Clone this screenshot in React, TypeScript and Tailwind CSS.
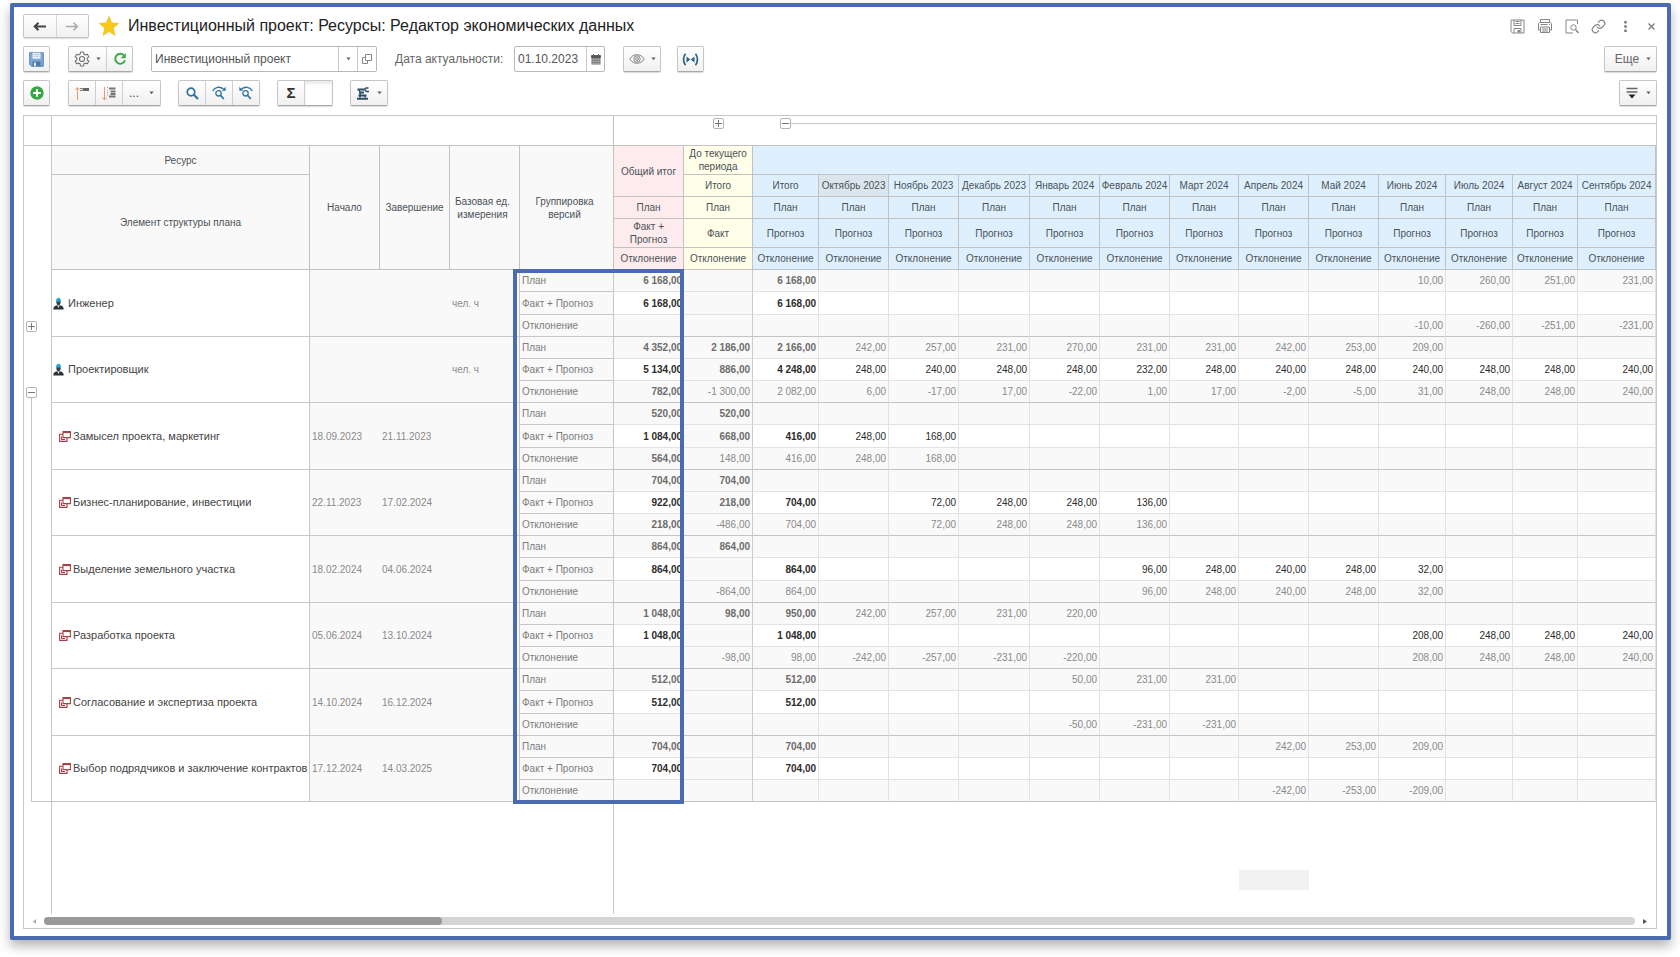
import React from 'react';
import clsx from 'clsx';

type Triple = [string[], string[], string[]];

interface ResourceRow {
  id: string;
  name: string;
  kind: 'person' | 'task';
  start?: string;
  end?: string;
  unit?: string;
  tree: 'plus' | 'minus' | 'line' | 'last';
  values: Triple;
}

const MONTHS = [
  'Октябрь 2023', 'Ноябрь 2023', 'Декабрь 2023', 'Январь 2024', 'Февраль 2024', 'Март 2024',
  'Апрель 2024', 'Май 2024', 'Июнь 2024', 'Июль 2024', 'Август 2024', 'Сентябрь 2024',
];

const VERSIONS = ['План', 'Факт + Прогноз', 'Отклонение'];

// Values are stored as: total | before current period | subtotal | 12 months
const line = (s: string) => s.split('|').map((v) => v.trim());

const rows: ResourceRow[] = [
  {
    id: 'engineer', name: 'Инженер', kind: 'person', unit: 'чел. ч', tree: 'plus',
    values: [
      line('6 168,00||6 168,00|||||||||10,00|260,00|251,00|231,00'),
      line('6 168,00||6 168,00||||||||||||'),
      line('|||||||||||-10,00|-260,00|-251,00|-231,00'),
    ],
  },
  {
    id: 'designer', name: 'Проектировщик', kind: 'person', unit: 'чел. ч', tree: 'minus',
    values: [
      line('4 352,00|2 186,00|2 166,00|242,00|257,00|231,00|270,00|231,00|231,00|242,00|253,00|209,00|||'),
      line('5 134,00|886,00|4 248,00|248,00|240,00|248,00|248,00|232,00|248,00|240,00|248,00|240,00|248,00|248,00|240,00'),
      line('782,00|-1 300,00|2 082,00|6,00|-17,00|17,00|-22,00|1,00|17,00|-2,00|-5,00|31,00|248,00|248,00|240,00'),
    ],
  },
  {
    id: 'concept', name: 'Замысел проекта, маркетинг', kind: 'task', start: '18.09.2023', end: '21.11.2023', tree: 'line',
    values: [
      line('520,00|520,00|||||||||||||'),
      line('1 084,00|668,00|416,00|248,00|168,00||||||||||'),
      line('564,00|148,00|416,00|248,00|168,00||||||||||'),
    ],
  },
  {
    id: 'business', name: 'Бизнес-планирование, инвестиции', kind: 'task', start: '22.11.2023', end: '17.02.2024', tree: 'line',
    values: [
      line('704,00|704,00|||||||||||||'),
      line('922,00|218,00|704,00||72,00|248,00|248,00|136,00|||||||'),
      line('218,00|-486,00|704,00||72,00|248,00|248,00|136,00|||||||'),
    ],
  },
  {
    id: 'land', name: 'Выделение земельного участка', kind: 'task', start: '18.02.2024', end: '04.06.2024', tree: 'line',
    values: [
      line('864,00|864,00|||||||||||||'),
      line('864,00||864,00|||||96,00|248,00|240,00|248,00|32,00|||'),
      line('|-864,00|864,00|||||96,00|248,00|240,00|248,00|32,00|||'),
    ],
  },
  {
    id: 'development', name: 'Разработка проекта', kind: 'task', start: '05.06.2024', end: '13.10.2024', tree: 'line',
    values: [
      line('1 048,00|98,00|950,00|242,00|257,00|231,00|220,00||||||||'),
      line('1 048,00||1 048,00|||||||||208,00|248,00|248,00|240,00'),
      line('|-98,00|98,00|-242,00|-257,00|-231,00|-220,00|||||208,00|248,00|248,00|240,00'),
    ],
  },
  {
    id: 'approval', name: 'Согласование и экспертиза проекта', kind: 'task', start: '14.10.2024', end: '16.12.2024', tree: 'line',
    values: [
      line('512,00||512,00||||50,00|231,00|231,00||||||'),
      line('512,00||512,00||||||||||||'),
      line('||||||-50,00|-231,00|-231,00||||||'),
    ],
  },
  {
    id: 'contracts', name: 'Выбор подрядчиков и заключение контрактов', kind: 'task', start: '17.12.2024', end: '14.03.2025', tree: 'last',
    values: [
      line('704,00||704,00|||||||242,00|253,00|209,00|||'),
      line('704,00||704,00||||||||||||'),
      line('|||||||||-242,00|-253,00|-209,00|||'),
    ],
  },
];

const COLUMN_CLASSES = [
  'w-[28px]', 'w-[258px]', 'w-[70px]', 'w-[70px]', 'w-[70px]', 'w-[94px]', 'w-[70px]', 'w-[69px]', 'w-[66px]',
  'w-[70px]', 'w-[70px]', 'w-[71px]', 'w-[70px]', 'w-[70px]', 'w-[69px]', 'w-[70px]', 'w-[70px]', 'w-[67px]',
  'w-[67px]', 'w-[65px]', 'w-[78px]',
];

const BUTTON = 'flex items-center justify-center bg-linear-to-b from-white to-[#f0f0f0]';
const GROUP = 'flex h-[26px] shrink-0 overflow-hidden rounded-xs border border-[#c6c6c6] border-b-[#a8a8a8] divide-x divide-[#cfcfcf] shadow-[0_1px_1px_rgba(0,0,0,0.15)]';

const Caret = () => (
  <svg width="5" height="4" viewBox="0 0 5 4" fill="#666"><path d="M.3.500h4.400L2.500 3.300z" /></svg>
);

const Toggle: React.FC<{ open?: boolean; label: string }> = ({ open, label }) => (
  <button aria-label={label} className="block h-[11px] w-[11px] shrink-0 rounded-xs border border-[#b4b4b4] bg-white">
    <svg width="9" height="9" viewBox="0 0 9 9" stroke="#777" strokeWidth="1" fill="none">
      <path d={open ? 'M1 4.500h7' : 'M1 4.500h7M4.500 1v7'} />
    </svg>
  </button>
);

const SaveIcon = () => (
  <svg width="15" height="15" viewBox="0 0 15 15">
    <path d="M.7.7h13.600v13.600H2.500L.7 12.500z" fill="#7fa8d6" stroke="#5b87ba" strokeWidth="1" />
    <path d="M3.500.8h8v5.900h-8z" fill="#e8f0f8" />
    <path d="M4.800 2.500h5.400M4.800 4.300h5.400" stroke="#9db9d8" strokeWidth=".7" />
    <path d="M3.500 9.500h8v4.800h-8z" fill="#4a76a8" />
    <path d="M5 10.500h2v3.800H5z" fill="#dfe9f3" />
  </svg>
);

const GearIcon = () => (
  <svg width="16" height="16" viewBox="0 0 24 24" fill="none" stroke="#747474" strokeWidth="1.700" strokeLinejoin="round">
    <path d="M9.800 1.500h4.400l.7 3.200 2 1.100 3.100-1 2.200 3.800-2.400 2.200v2.400l2.400 2.200-2.200 3.800-3.100-1-2 1.100-.7 3.200H9.800l-.7-3.200-2-1.100-3.100 1-2.200-3.800 2.400-2.200v-2.400L1.800 8.600 4 4.800l3.100 1 2-1.100z" />
    <circle cx="12" cy="12" r="3.800" />
  </svg>
);

const RefreshIcon = () => (
  <svg width="14" height="14" viewBox="0 0 14 14" fill="none" stroke="#3cab4a" strokeWidth="2">
    <path d="M11 3.400A5 5 0 1 0 12 8.300" />
    <path d="M12.800 1v5.200H7.600z" fill="#3cab4a" stroke="none" />
  </svg>
);

const OpenIcon = () => (
  <svg width="10" height="10" viewBox="0 0 10 10" fill="#fff" stroke="#888" strokeWidth="1">
    <path d="M.5 3.500h5v6h-5z" />
    <path d="M3.500.5h6v6h-6z" />
  </svg>
);

const CalendarIcon = () => (
  <svg width="10" height="11" viewBox="0 0 10 11">
    <path d="M.5 1.500h9v9h-9z" fill="#777" />
    <path d="M.5 1.500h9v2h-9zM2.500 0v2M7.500 0v2" fill="#555" stroke="#555" strokeWidth=".8" />
    <path d="M1.500 5.200h7M1.500 7.200h7M1.500 9.200h7" stroke="#e4e4e4" strokeWidth=".8" strokeDasharray="1.200 .7" />
  </svg>
);

const EyeIcon = () => (
  <svg width="16" height="12" viewBox="0 0 16 12" fill="none" stroke="#888" strokeWidth="1">
    <path d="M.8 6C4 .3 12 .3 15.200 6 12 11.700 4 11.700.8 6z" />
    <circle cx="8" cy="6" r="3.200" />
    <circle cx="8" cy="6" r="1.400" />
  </svg>
);

const SyncIcon = () => (
  <svg width="17" height="13" viewBox="0 0 17 13" fill="none" stroke="#2c6184" strokeWidth="1.700">
    <path d="M3.500.8c-2.600 3.300-2.600 8.100 0 11.400M13.500.8c2.600 3.300 2.600 8.100 0 11.400" />
    <path d="M4.500 3.500L8.300 6.500 4.500 9.500zM12.500 3.500L8.700 6.500l3.800 3z" fill="#2c6184" stroke="none" />
  </svg>
);

const AddIcon = () => (
  <svg width="14" height="14" viewBox="0 0 14 14">
    <circle cx="7" cy="7" r="6.700" fill="#35a745" />
    <path d="M7 3.200v7.600M3.200 7h7.600" stroke="#fff" strokeWidth="2" />
  </svg>
);

const CollapseIcon = () => (
  <svg width="14" height="15" viewBox="0 0 14 15" fill="none">
    <path d="M2.500 14V2M.5 4l2-2.500 2 2.500" stroke="#eb9a6c" strokeWidth="1" />
    <path d="M5 2.500h2M5 4.500h2" stroke="#777" />
    <path d="M7.500 3.500H14" stroke="#666" strokeWidth="3" />
  </svg>
);

const ExpandIcon = () => (
  <svg width="14" height="15" viewBox="0 0 14 15" fill="none">
    <path d="M2.500 1v12.500M.5 11.500l2 2.500 2-2.500" stroke="#eb9a6c" strokeWidth="1" />
    <path d="M7 2.500h6.500M8.500 5.500h5M8.500 8h5M7 10.500h6.500" stroke="#777" strokeWidth="1.800" />
    <path d="M5.500 1v10" stroke="#999" strokeDasharray="1 1.500" />
  </svg>
);

const SearchIcon = () => (
  <svg width="13" height="13" viewBox="0 0 13 13" fill="none" stroke="#2f74a5">
    <circle cx="5" cy="5" r="3.800" strokeWidth="1.700" />
    <path d="M7.800 7.800l4.200 4.200" strokeWidth="2.200" />
  </svg>
);

const SearchTurnIcon: React.FC<{ back?: boolean }> = ({ back }) => (
  <svg width="14" height="14" viewBox="0 0 14 14" fill="none" stroke="#2f74a5">
    <path d={back ? 'M2.500 3C6 .2 11 .8 13.300 5' : 'M11.500 3C8 .2 3 .8.7 5'} strokeWidth="1.300" />
    <path d={back ? 'M.3.800v4h4z' : 'M13.700.800v4h-4z'} fill="#2f74a5" stroke="none" />
    <circle cx="6.500" cy="7.300" r="2.700" strokeWidth="1.300" />
    <path d="M8.500 9.300l3.300 3.700" strokeWidth="1.700" />
  </svg>
);

const RobotIcon = () => (
  <svg width="14" height="13" viewBox="0 0 14 13" fill="none" stroke="#2b4d66">
    <path d="M1 11.800h11" strokeWidth="2" />
    <path d="M1.500 2.500h7M3 5.500h5" strokeWidth="2" />
    <path d="M2.500 2.500l2.500 4M8.500 2.500l1.500-1.500h2.500M8.500 2.500l2 2h2.500" strokeWidth="1.400" />
    <path d="M2.500 8.500h8" strokeWidth="2" />
    <path d="M4 6.500v4M9 8.500v2" strokeWidth="1.600" />
  </svg>
);

const FilterIcon = () => (
  <svg width="12" height="12" viewBox="0 0 12 12">
    <path d="M.5 1.500h11M.5 5h11" stroke="#666" strokeWidth="1.300" />
    <path d="M2.500 7.500h7L6 11.500z" fill="#222" />
  </svg>
);

const DisketteIcon = () => (
  <svg width="15" height="15" viewBox="0 0 15 15" fill="none" stroke="#858585">
    <path d="M1 1h13v13H2.500L1 12.500z" />
    <path d="M4 1v5.500h7V1M5.500 2.500h4M5.500 4.500h4M4 14v-4.500h7V14" />
    <path d="M7.500 11h2.500v2.500H7.500z" fill="#858585" stroke="none" />
  </svg>
);

const PrinterIcon = () => (
  <svg width="16" height="16" viewBox="0 0 16 16" fill="none" stroke="#858585">
    <path d="M3.500 4.500v-3h9v3M3.500 12h-2V5.500l1-1h11l1 1V12h-2" />
    <path d="M3.500 9h9v5.500h-9zM3.500 6.500h7M5 11h6M5 13h6" />
    <path d="M12 6.500h1" />
  </svg>
);

const PreviewIcon = () => (
  <svg width="14" height="15" viewBox="0 0 14 15" fill="none" stroke="#858585">
    <path d="M12.500 5V1H1v13h7" />
    <circle cx="8.500" cy="8.500" r="2.700" />
    <path d="M10.500 10.500l3 3.500" strokeWidth="1.500" />
  </svg>
);

const LinkIcon = () => (
  <svg width="15" height="15" viewBox="0 0 24 24" fill="none" stroke="#858585" strokeWidth="1.900" strokeLinecap="round">
    <path d="M10 13a5 5 0 0 0 7.540.54l3-3a5 5 0 0 0-7.070-7.070l-1.720 1.710" />
    <path d="M14 11a5 5 0 0 0-7.540-.54l-3 3a5 5 0 0 0 7.070 7.070l1.710-1.710" />
  </svg>
);

const PersonIcon = () => (
  <svg width="11" height="13" viewBox="0 0 11 13" className="shrink-0">
    <path d="M.3 12.500c0-3 1.500-4 3.500-4.300h3.400c2 .3 3.500 1.300 3.500 4.300z" fill="#2c3338" />
    <path d="M4.200 8.200h2.600L5.500 11z" fill="#cfe6f2" />
    <ellipse cx="5.500" cy="5.300" rx="2.100" ry="2.900" fill="#3a4248" />
    <path d="M3 4.500C3-.5 8-.5 8 4.500z" fill="#23a3dc" />
  </svg>
);

const TaskIcon = () => (
  <svg width="12" height="11" viewBox="0 0 12 11" fill="#fff" stroke="#a8404a" strokeWidth="1.100" className="shrink-0">
    <path d="M.6 3.200h7.400v7.200H.6z" />
    <path d="M4 .6h7.400v6H4z" />
    <path d="M4 1.300h7.400" strokeWidth="1.600" />
    <path d="M2.300 8.500H6M2.500 8.500V5.500" />
  </svg>
);

const TreeCell: React.FC<{ row: ResourceRow }> = ({ row }) => {
  if (row.tree === 'plus' || row.tree === 'minus') {
    return (
      <td rowSpan={3} className="h-px border-r border-[#c8c8c8] p-0 align-bottom">
        <div className="flex h-full flex-col items-start justify-end pl-[2px]">
          <Toggle open={row.tree === 'minus'} label={row.name} />
          <div className={clsx('ml-[5px] h-[5px]', row.tree === 'minus' && 'border-l border-[#c4c4c4]')} />
        </div>
      </td>
    );
  }
  return (
    <td rowSpan={3} className="h-px border-r border-[#c8c8c8] p-0">
      <div className={clsx('ml-[7px] h-full border-l border-[#c4c4c4]', row.tree === 'last' && 'border-b')} />
    </td>
  );
};

const valueClass = (version: number, col: number) => {
  const bold = col === 0 || (col < 3 && version < 2);
  const white = version === 1 && col !== 1;
  return clsx(
    bold && 'font-bold',
    white ? 'bg-white text-[#2c2c2c]' : 'bg-[#f9f9f9]',
    !white && (bold ? 'text-[#6c6c6c]' : 'text-[#8a8a8a]'),
    version === 2 ? 'border-b-[#c4c4c4]' : 'border-b-[#e2e2e2]',
    col < 2 ? 'border-r-[#cccccc]' : 'border-r-[#e2e2e2]',
    col === 0 ? 'pr-px' : 'pr-[2px]',
  );
};

const HEAD = 'border-r border-b border-[#c2c2c2] p-0 text-center font-normal';

const App: React.FC = () => {
  const headLine = (label: string) => (
    <>
      <th className={clsx(HEAD, 'bg-[#fdebed]')}>{label}</th>
      <th className={clsx(HEAD, 'bg-[#fefee9]')}>{label}</th>
      {['Итого', ...MONTHS].map((m) => (
        <th key={m} className={clsx(HEAD, 'bg-[#def0fe]')}>{label}</th>
      ))}
    </>
  );

  return (
    <div className="min-h-screen overflow-hidden bg-white pt-[3px] pr-[9px] pb-4 pl-[10px] font-['Liberation_Sans',Arial,sans-serif] text-[#444]">
      <main className="rounded-xs border-4 border-[#4a6baf] bg-white py-[7px] pr-[10px] pl-[9px] shadow-[0_6px_12px_rgba(0,0,0,0.3)]">
        {/* Title bar */}
        <header className="flex h-[24px] items-center">
          <div className="flex h-[24px] w-[66px] overflow-hidden rounded-xs border border-[#c6c6c6] divide-x divide-[#d6d6d6] shadow-[0_1px_1px_rgba(0,0,0,0.15)]">
            <button aria-label="Назад" className={clsx(BUTTON, 'flex-1')}>
              <svg width="13" height="9" viewBox="0 0 13 9" fill="none" stroke="#444" strokeWidth="2"><path d="M13 4.500H2M5.500.7L1.700 4.500l3.800 3.800" /></svg>
            </button>
            <button aria-label="Вперед" className={clsx(BUTTON, 'flex-1')}>
              <svg width="13" height="9" viewBox="0 0 13 9" fill="none" stroke="#aaa" strokeWidth="1.600"><path d="M0 4.500h11M7.500.7l3.800 3.800-3.800 3.800" /></svg>
            </button>
          </div>
          <svg width="20" height="20" viewBox="0 0 20 20" className="ml-[10px]">
            <path d="M10 .3l2.700 6.500 7 .6-5.300 4.600 1.600 7.500L10 15.600 4 19.500l1.600-7.500L.3 7.400l7-.6z" fill="#f7ca18" stroke="#e3b21c" strokeWidth=".5" />
          </svg>
          <h1 className="ml-[9px] text-[16px] leading-[24px] text-[#222]">Инвестиционный проект: Ресурсы: Редактор экономических данных</h1>
          <div className="ml-auto flex items-center gap-3">
            <button aria-label="Сохранить"><DisketteIcon /></button>
            <button aria-label="Печать"><PrinterIcon /></button>
            <button aria-label="Просмотр"><PreviewIcon /></button>
            <button aria-label="Ссылка"><LinkIcon /></button>
            <button aria-label="Меню" className="flex w-[15px] justify-center">
              <svg width="3" height="11" viewBox="0 0 3 11" fill="#777"><path d="M.3 0h2.400v2.400H.3zM.3 4.300h2.400v2.400H.3zM.3 8.600h2.400V11H.3z" /></svg>
            </button>
            <button aria-label="Закрыть" className="flex w-[12px] justify-center">
              <svg width="7" height="7" viewBox="0 0 7 7" stroke="#777" strokeWidth="1.200"><path d="M.5.5l6 6M6.500.5l-6 6" /></svg>
            </button>
          </div>
        </header>

        {/* Main toolbar */}
        <div className="mt-2 flex h-[26px] items-center text-[12px]">
          <div className={GROUP}>
            <button aria-label="Записать" className={clsx(BUTTON, 'w-[25px]')}><SaveIcon /></button>
          </div>
          <div className={clsx(GROUP, 'ml-[18px]')}>
            <button aria-label="Настройки" className={clsx(BUTTON, 'w-[38px] gap-[6px]')}><GearIcon /><Caret /></button>
            <button aria-label="Обновить" className={clsx(BUTTON, 'w-[25px]')}><RefreshIcon /></button>
          </div>
          <div className="ml-[18px] flex h-[26px] w-[226px] rounded-xs border border-[#b8b8b8] divide-x divide-[#c8c8c8]">
            <input aria-label="Проект" defaultValue="Инвестиционный проект" className="w-[187px] pl-[3px] text-[#555] outline-none" />
            <button aria-label="Выбрать" className="flex w-[19px] items-center justify-center"><Caret /></button>
            <button aria-label="Открыть" className="flex flex-1 items-center justify-center"><OpenIcon /></button>
          </div>
          <label htmlFor="date" className="ml-[18px] w-[119px] whitespace-nowrap text-[#666]">Дата актуальности:</label>
          <div className="flex h-[26px] w-[91px] rounded-xs border border-[#b8b8b8] divide-x divide-[#c8c8c8]">
            <input id="date" defaultValue="01.10.2023" className="w-[72px] pl-[3px] text-[#555] outline-none" />
            <button aria-label="Календарь" className="flex flex-1 items-center justify-center"><CalendarIcon /></button>
          </div>
          <div className={clsx(GROUP, 'ml-[18px]')}>
            <button aria-label="Видимость" className={clsx(BUTTON, 'w-[36px] gap-[6px]')}><EyeIcon /><Caret /></button>
          </div>
          <div className={clsx(GROUP, 'ml-[16px]')}>
            <button aria-label="Синхронизация" className={clsx(BUTTON, 'w-[25px]')}><SyncIcon /></button>
          </div>
          <div className={clsx(GROUP, 'ml-auto')}>
            <button className={clsx(BUTTON, 'w-[51px] gap-[7px] pl-[5px] text-[#666]')}>Еще<Caret /></button>
          </div>
        </div>

        {/* Table toolbar */}
        <div className="mt-2 flex h-[26px] items-center text-[12px]">
          <div className={GROUP}>
            <button aria-label="Добавить" className={clsx(BUTTON, 'w-[25px]')}><AddIcon /></button>
          </div>
          <div className={clsx(GROUP, 'ml-[18px]')}>
            <button aria-label="Свернуть" className={clsx(BUTTON, 'w-[27px]')}><CollapseIcon /></button>
            <button aria-label="Развернуть" className={clsx(BUTTON, 'w-[27px]')}><ExpandIcon /></button>
            <button aria-label="Уровни" className={clsx(BUTTON, 'w-[37px] gap-[10px]')}>...<Caret /></button>
          </div>
          <div className={clsx(GROUP, 'ml-[17px]')}>
            <button aria-label="Найти" className={clsx(BUTTON, 'w-[27px]')}><SearchIcon /></button>
            <button aria-label="Найти далее" className={clsx(BUTTON, 'w-[27px]')}><SearchTurnIcon /></button>
            <button aria-label="Найти ранее" className={clsx(BUTTON, 'w-[26px]')}><SearchTurnIcon back /></button>
          </div>
          <div className={clsx(GROUP, 'ml-[17px]')}>
            <button aria-label="Сумма" className={clsx(BUTTON, 'w-[27px] text-[15px] font-bold text-[#333]')}>Σ</button>
            <input aria-label="Результат" readOnly className="w-[27px] bg-white shadow-[inset_0_3px_3px_rgba(0,0,0,0.08)] outline-none" />
          </div>
          <div className={clsx(GROUP, 'ml-[17px]')}>
            <button aria-label="Обработка" className={clsx(BUTTON, 'w-[36px] gap-[7px]')}><RobotIcon /><Caret /></button>
          </div>
          <div className={clsx(GROUP, 'ml-auto')}>
            <button aria-label="Отбор" className={clsx(BUTTON, 'w-[36px] gap-[8px]')}><FilterIcon /><Caret /></button>
          </div>
        </div>

        {/* Data grid */}
        <section className="relative mt-[9px] border border-[#c8c8c8]">
          <table className="w-full table-fixed border-separate border-spacing-0 text-[10px] leading-[13px] whitespace-nowrap">
            <colgroup>
              {COLUMN_CLASSES.map((c, i) => <col key={i} className={c} />)}
            </colgroup>
            <thead className="text-[#4c5258]">
              <tr className="h-[30px]">
                <td className="border-r border-b border-[#c8c8c8]" />
                <td colSpan={5} className="border-r border-b border-[#c2c2c2]" />
                <td className="border-b border-[#c2c2c2]" />
                <td className="border-b border-[#c2c2c2] p-0 pt-[2px] align-top">
                  <div className="flex justify-center"><Toggle label="До текущего периода" /></div>
                </td>
                <td colSpan={13} className="border-b border-[#c2c2c2] p-0 pt-[2px] pl-[27px] align-top">
                  <div className="flex items-center"><Toggle open label="Периоды" /><div className="h-px flex-1 bg-[#c8c8c8]" /></div>
                </td>
              </tr>
              <tr className="h-[29px]">
                <td rowSpan={5} className="border-r border-[#c8c8c8]" />
                <th className={clsx(HEAD, 'bg-[#f9f9f9]')}>Ресурс</th>
                <th rowSpan={5} className={clsx(HEAD, 'bg-[#f9f9f9]')}>Начало</th>
                <th rowSpan={5} className={clsx(HEAD, 'bg-[#f9f9f9]')}>Завершение</th>
                <th rowSpan={5} className={clsx(HEAD, 'bg-[#f9f9f9] pr-1')}>Базовая ед.<br />измерения</th>
                <th rowSpan={5} className={clsx(HEAD, 'bg-[#f9f9f9] pr-1')}>Группировка<br />версий</th>
                <th rowSpan={2} className={clsx(HEAD, 'bg-[#fdebed]')}>Общий итог</th>
                <th className={clsx(HEAD, 'bg-[#fefee9]')}>До текущего<br />периода</th>
                <th colSpan={13} className={clsx(HEAD, 'bg-[#def0fe]')} />
              </tr>
              <tr className="h-[22px]">
                <th rowSpan={4} className={clsx(HEAD, 'bg-[#f9f9f9]')}>Элемент структуры плана</th>
                <th className={clsx(HEAD, 'bg-[#fefee9]')}>Итого</th>
                <th className={clsx(HEAD, 'bg-[#def0fe]')}>Итого</th>
                {MONTHS.map((m, i) => (
                  <th key={m} className={clsx(HEAD, i === 0 ? 'bg-[#dbe5ed]' : 'bg-[#def0fe]')}>{m}</th>
                ))}
              </tr>
              <tr className="h-[22px]">{headLine('План')}</tr>
              <tr className="h-[29px]">
                <th className={clsx(HEAD, 'bg-[#fdebed]')}>Факт +<br />Прогноз</th>
                <th className={clsx(HEAD, 'bg-[#fefee9]')}>Факт</th>
                {['Итого', ...MONTHS].map((m) => <th key={m} className={clsx(HEAD, 'bg-[#def0fe]')}>Прогноз</th>)}
              </tr>
              <tr className="h-[22px]">{headLine('Отклонение')}</tr>
            </thead>
            <tbody>
              {rows.map((row, r) =>
                VERSIONS.map((version, v) => (
                  <tr key={row.id + v} className={v === 1 && r % 2 === 0 ? 'h-[23px]' : 'h-[22px]'}>
                    {v === 0 && (
                      <>
                        <TreeCell row={row} />
                        <td rowSpan={3} className="border-r border-b border-[#c8c8c8] p-0 text-[11px]">
                          <div className={clsx('flex items-center', row.kind === 'person' ? 'gap-[4px] pl-px' : 'gap-[2px] pl-[7px]')}>
                            {row.kind === 'person' ? <PersonIcon /> : <TaskIcon />}
                            <span>{row.name}</span>
                          </div>
                        </td>
                        <td rowSpan={3} className="border-b border-[#c8c8c8] bg-[#f9f9f9] p-0 pl-[2px] text-[#8a8a8a]">{row.start}</td>
                        <td rowSpan={3} className="border-b border-[#c8c8c8] bg-[#f9f9f9] p-0 pl-[2px] text-[#8a8a8a]">{row.end}</td>
                        <td rowSpan={3} className="border-r border-b border-[#c8c8c8] bg-[#f9f9f9] p-0 pl-[2px] text-[#8a8a8a]">{row.unit}</td>
                      </>
                    )}
                    <td className="border-r border-b border-[#c8c8c8] bg-[#f9f9f9] p-0 pl-[2px] text-[#7c7c7c]">{version}</td>
                    {row.values[v].map((value, c) => (
                      <td key={c} className={clsx('border-r border-b p-0 text-right', valueClass(v, c))}>{value}</td>
                    ))}
                  </tr>
                )),
              )}
              <tr className="h-[112px]">
                <td className="border-r border-[#c8c8c8]" />
                <td colSpan={5} className="border-r border-[#c8c8c8]" />
                <td colSpan={8} />
                <td />
                <td className="p-0"><div className="mt-14 mb-3 h-5 bg-[#f1f1f1]" /></td>
                <td colSpan={5} />
              </tr>
            </tbody>
          </table>

          {/* Highlight around version grouping and totals */}
          <div className="pointer-events-none absolute top-[153px] left-[489px] h-[535px] w-[171px] border-4 border-[#4a6baf]" />

          <div className="flex items-center px-[9px] py-[3px]">
            <svg width="3" height="5" viewBox="0 0 3 5" fill="#aaa"><path d="M3 0v5L0 2.500z" /></svg>
            <div className="mx-2 h-2 flex-1 rounded-full bg-[#d4d4d4]">
              <div className="h-2 w-1/4 rounded-full bg-[#999]" />
            </div>
            <svg width="4" height="5" viewBox="0 0 4 5" fill="#555"><path d="M0 0v5l4-2.500z" /></svg>
          </div>
        </section>
      </main>
    </div>
  );
};

export default App;
